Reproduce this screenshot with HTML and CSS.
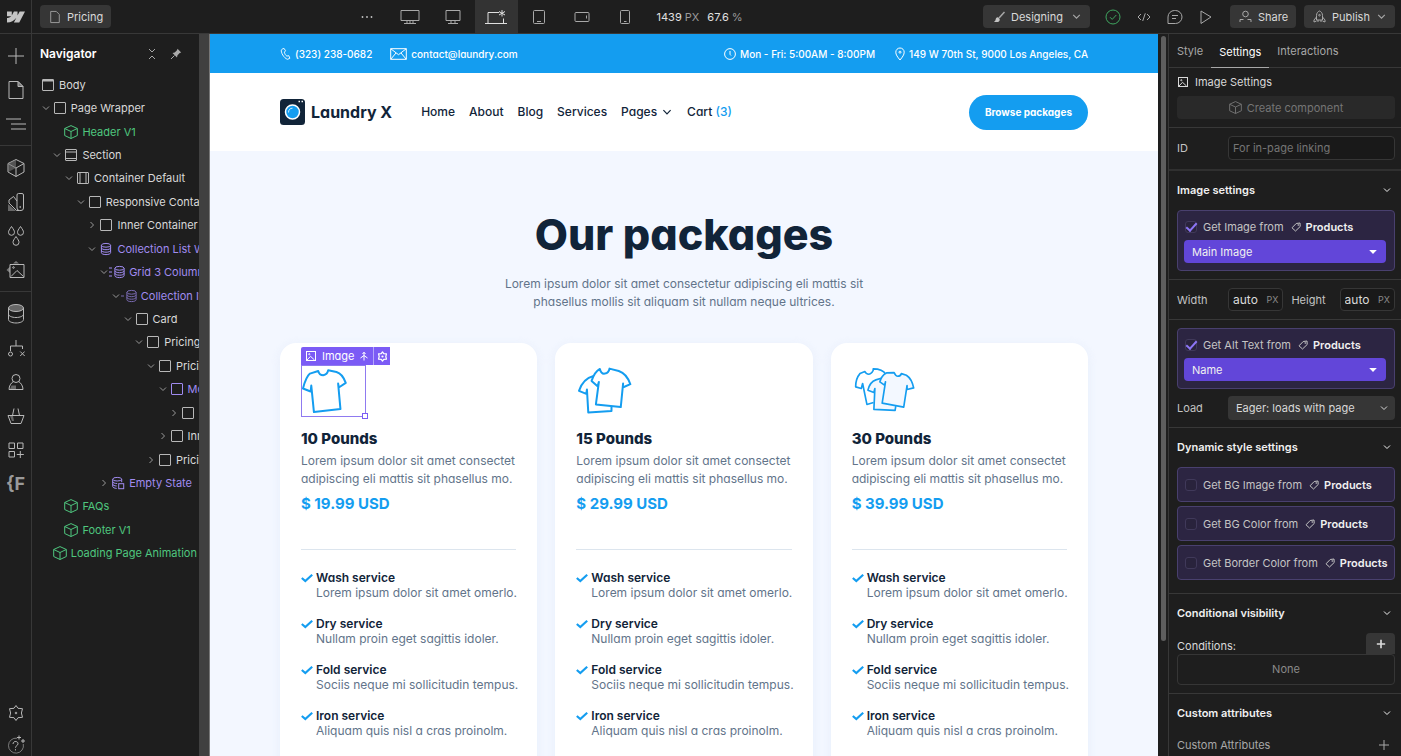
FILE: index.html
```html
<!DOCTYPE html>
<html lang="en">
<head>
<meta charset="utf-8">
<title>Pricing – Designer</title>
<link rel="stylesheet" href="styles.css">
</head>
<body>
<svg class="sprite" aria-hidden="true">
  <symbol id="i-chev" viewBox="0 0 10 10"><path d="M2 3.5 5 6.5 8 3.5"/></symbol>
  <symbol id="i-chev-r" viewBox="0 0 10 10"><path d="M3.5 2 6.5 5 3.5 8"/></symbol>
  <symbol id="i-box" viewBox="0 0 14 14"><rect x="1.5" y="1.5" width="11" height="11" rx=".5"/></symbol>
  <symbol id="i-body" viewBox="0 0 14 14"><rect x="1.5" y="1.5" width="11" height="11" rx=".5"/><path d="M1.5 2.5h11" stroke-width="2"/></symbol>
  <symbol id="i-section" viewBox="0 0 14 14"><rect x="1.5" y="1.5" width="11" height="11" rx=".5"/><path d="M1.5 4h11M1.5 10.5h11"/></symbol>
  <symbol id="i-container" viewBox="0 0 14 14"><rect x="1.5" y="1.5" width="11" height="11" rx=".5"/><path d="M4 1.5v11M10 1.5v11"/></symbol>
  <symbol id="i-cube" viewBox="1 1 14 14"><path d="M8 1.600 14.300 4.500v7L8 14.500 1.700 11.500v-7zM1.700 4.500 8 7.500l6.300-3M8 7.500v7"/></symbol>
  <symbol id="i-db" viewBox="0 0 14 14"><ellipse cx="7" cy="3.3" rx="4.6" ry="1.9"/><path d="M2.4 3.3v7.4c0 1.1 2 1.9 4.6 1.9s4.6-.8 4.6-1.9V3.3M2.4 5.8C2.4 6.9 4.4 7.700 7 7.700s4.600-.8 4.600-1.900M2.400 8.300c0 1.100 2 1.900 4.600 1.900s4.600-.8 4.600-1.900"/></symbol>
  <symbol id="i-db-list" viewBox="0 0 17 14"><path d="M0 3h3M0 7h3M0 11h3"/><ellipse cx="10.500" cy="3.300" rx="4.600" ry="1.900"/><path d="M5.900 3.300v7.400c0 1.100 2 1.900 4.600 1.900s4.600-.8 4.600-1.900V3.300M5.900 5.800c0 1.100 2 1.900 4.600 1.900s4.600-.8 4.600-1.900M5.900 8.300c0 1.100 2 1.900 4.600 1.900s4.600-.8 4.600-1.900"/></symbol>
  <symbol id="i-db-item" viewBox="0 0 17 14"><path d="M0 7h3"/><ellipse cx="10.500" cy="3.300" rx="4.600" ry="1.900"/><path d="M5.900 3.300v7.400c0 1.100 2 1.900 4.600 1.900s4.600-.8 4.600-1.900V3.300M5.900 5.800c0 1.100 2 1.900 4.600 1.900s4.600-.8 4.600-1.900M5.900 8.300c0 1.100 2 1.900 4.600 1.900s4.600-.8 4.600-1.900"/></symbol>
  <symbol id="i-db-empty" viewBox="0 0 14 14"><ellipse cx="6.200" cy="3.200" rx="4.500" ry="1.800"/><path d="M1.700 3.200v7.300c0 1 1.800 1.800 4 1.900M1.700 5.700c0 1 2 1.800 4.500 1.800M1.700 8.200c0 1 1.800 1.700 4 1.800M10.700 3.200v3"/><rect x="7.700" y="7.700" width="5" height="5"/></symbol>
  <symbol id="i-tag" viewBox="0 0 12 12"><path d="M6.200 2.500 10 2 10.200 5.500 5.500 10 2 6.800z"/><circle cx="8.200" cy="4" r=".4"/></symbol>
  <symbol id="i-image" viewBox="0 0 12 12"><rect x="1.500" y="1.500" width="9" height="9"/><path d="m2 10 3.500-3.700L9.500 10"/><circle cx="4.300" cy="4.200" r=".6"/></symbol>
  <symbol id="i-gear" viewBox="0 0 18 18"><path d="M9 1.500 11 4.300 15.500 4.700 14.400 9 15.500 13.300 11 13.700 9 16.500 7 13.700 2.500 13.300 3.600 9 2.500 4.700 7 4.300z" stroke-linejoin="round"/><circle cx="9" cy="9" r=".8"/></symbol>
  <symbol id="i-check" viewBox="0 0 12 12"><path d="M.800 6.500 4.300 9.500 11.200 3.200" stroke-width="2.200"/></symbol>
  <symbol id="i-page" viewBox="0 0 14 16"><path d="M2 1.500h6.500L12 5v9.500H2z"/></symbol>
  <symbol id="i-plus" viewBox="0 0 12 12"><path d="M6 1v10M1 6h10"/></symbol>
</svg>

<div class="app">
  <header class="topbar">
    <a class="logo" href="#" aria-label="Dashboard"><svg width="18" height="18" viewBox="0 0 24 24"><path fill="#c4c4c4" stroke="none" d="m24 4.515-7.658 14.970H9.149l3.205-6.204h-.144C9.566 16.713 5.621 18.973 0 19.485v-6.118s3.596-.213 5.710-2.435H0V4.515h6.417v5.278l.144-.001 2.622-5.277h4.854v5.244h.144l2.720-5.244H24Z"/></svg></a>
    <div class="topbar-main">
      <button class="btn"><svg width="12" height="14"><use href="#i-page"/></svg>Pricing</button>
      <div class="devices">
        <button class="device more" aria-label="More"><svg width="14" height="4" viewBox="0 0 14 4"><g fill="#c4c4c4" stroke="none"><circle cx="2.500" cy="2" r=".9"/><circle cx="7" cy="2" r=".9"/><circle cx="11.500" cy="2" r=".9"/></g></svg></button>
        <button class="device" aria-label="Large desktop"><svg width="20" height="16" viewBox="0 0 20 16"><path d="M1 1.500h18v10H1zM4 14.500h12M7 11.500v3M10 11.500v3M13 11.500v3"/></svg></button>
        <button class="device" aria-label="Desktop"><svg width="16" height="16" viewBox="0 0 16 16"><path d="M1 1.500h14v10H1zM3 14.500h10M6 11.500v3M10 11.500v3"/></svg></button>
        <button class="device active" aria-label="Base"><svg width="22" height="16" viewBox="0 0 22 16"><path d="M0 14.500h22M3 14V3.500h11M18.500 9.500V14M17 1v6.500M14 2.500l6 3.500M20 2.500 14 6" stroke="#e0e0e0"/></svg></button>
        <button class="device" aria-label="Tablet"><svg width="14" height="16" viewBox="0 0 14 16"><rect x="1.500" y="1.500" width="11" height="13" rx="1"/><path d="M5 12.500h4"/></svg></button>
        <button class="device" aria-label="Mobile landscape"><svg width="16" height="16" viewBox="0 0 16 16"><rect x="1" y="3.500" width="14" height="9" rx="1"/><path d="M12.500 6.500v3"/></svg></button>
        <button class="device" aria-label="Mobile portrait"><svg width="12" height="16" viewBox="0 0 12 16"><rect x="1.500" y="1.500" width="9" height="13" rx="1"/><path d="M5 12.500h2.500"/></svg></button>
        <p class="zoom"><span>1439 <i>PX</i></span><span>67.6 <i>%</i></span></p>
      </div>
      <div class="actions">
        <button class="btn mode"><svg width="12" height="12" viewBox="0 0 12 12"><path d="M11.500 1 6 7" stroke-width="1.500"/><path d="M5 6.300c-2 0-2.300 1.500-2.500 3L1 11h4c1.500-.5 2-2 1.600-3z" fill="#c4c4c4" stroke="none"/></svg>Designing<svg class="chev" width="11" height="11"><use href="#i-chev"/></svg></button>
        <button class="tool" aria-label="Saved"><svg width="16" height="16" viewBox="0 0 16 16" class="ok"><circle cx="8" cy="8" r="7"/><path d="m5 8.200 2.200 2.200L11.300 6"/></svg></button>
        <button class="tool" aria-label="Export code"><svg width="14" height="14" viewBox="0 0 14 14"><path d="M4 4 1 7l3 3M10 4l3 3-3 3M8.300 3.300 5.700 11"/></svg></button>
        <button class="tool" aria-label="Comments"><svg width="16" height="16" viewBox="0 0 16 16"><path d="M1 14.500V8a6.500 6.500 0 0 1 6.500-6.500h1a6.500 6.500 0 0 1 0 13zM5 6.500h6M5 9.500h4"/></svg></button>
        <button class="tool" aria-label="Preview"><svg width="14" height="16" viewBox="0 0 14 16"><path d="M2 2v12.500L12 8z"/></svg></button>
        <button class="btn share"><svg width="13" height="13" viewBox="0 0 13 13"><circle cx="6.500" cy="4" r="2.800"/><path d="M1 12V9.500h3.500M8.500 9.500H12V12"/></svg>Share</button>
        <button class="btn publish"><svg width="13" height="13" viewBox="0 0 13 13"><path d="M3.500 10V5.500C3.500 3 5 1.500 6.500 1 8 1.500 9.500 3 9.500 5.500V10zM3.500 7 1 10v2l2.500-1M9.500 7l2.500 3v2l-2.500-1M5 10v2M8 10v2"/><circle cx="6.500" cy="5.200" r=".8"/></svg>Publish<svg class="chev" width="11" height="11"><use href="#i-chev"/></svg></button>
      </div>
    </div>
  </header>

  <nav class="rail" aria-label="Tools">
    <div class="rail-group">
      <button aria-label="Add"><svg width="18" height="18" viewBox="0 0 18 18"><path d="M9 1v16M1 9h16"/></svg></button>
      <button aria-label="Pages"><svg width="18" height="20" viewBox="0 0 18 20"><path d="M2 1.500h9l5 5v12H2z"/><path d="M11 1.500v5h5z" fill="#777"/></svg></button>
      <button aria-label="Navigator"><svg width="20" height="14" viewBox="0 0 20 14"><path d="M0 2h15M5 7h15M5 12h15"/></svg></button>
    </div>
    <div class="rail-group">
      <button aria-label="Components"><svg width="18" height="20" viewBox="0 0 18 20"><path d="m9 1.500 8 4V14l-8 4.500L1 14V5.500zM1 5.500l8 4.500 8-4.500M9 10v8.500"/><path d="m9 1.500 0 8.500L1 14V5.500z" fill="#777" stroke="none" opacity=".6"/></svg></button>
      <button aria-label="Variables"><svg width="18" height="20" viewBox="0 0 18 20"><path d="M1 12v7h8z" fill="#666" stroke="none"/><path d="M10 3a1.500 1.500 0 0 1 1.500-1.500H15A1.500 1.500 0 0 1 16.500 3v13a2.500 2.500 0 0 1-2.500 2.500h-1.500A2.500 2.500 0 0 1 10 16zM10 9 6.500 4.500 2 8v3l7.500 7.500h3"/><circle cx="13.200" cy="15" r=".5"/></svg></button>
      <button aria-label="Styles"><svg width="18" height="22" viewBox="0 0 18 22"><path d="M4.500 1.500c2 3 3 4.300 3 5.800a3 3 0 0 1-6 0c0-1.500 1-2.800 3-5.800zM13.500 1.500c2 3 3 4.300 3 5.800a3 3 0 0 1-6 0c0-1.500 1-2.800 3-5.800zM9 11.500c2 3 3 4.300 3 5.800a3 3 0 0 1-6 0c0-1.500 1-2.800 3-5.800z"/></svg></button>
      <button aria-label="Assets"><svg width="20" height="20" viewBox="0 0 20 20"><path d="M7 3.500 10 1l3 2.500zM4 6.500 .5 10 4 13z" fill="#777" stroke="none"/><path d="M4 4.500h14v13H4zM5 16.500l6-6 6.500 6"/><circle cx="7.500" cy="7.500" r=".8"/></svg></button>
    </div>
    <div class="rail-group">
      <button aria-label="CMS"><svg width="18" height="22" viewBox="0 0 18 22"><ellipse cx="9" cy="5" rx="7.500" ry="3.500" fill="#666"/><path d="M1.500 5v11.500c0 2 3.300 3.500 7.500 3.500s7.500-1.500 7.500-3.500V5M1.500 11c0 2 3.300 3.500 7.500 3.500s7.500-1.500 7.500-3.500"/></svg></button>
      <button aria-label="Logic"><svg width="18" height="18" viewBox="0 0 18 18"><path d="M9 1v6M3.500 12V7h12v3M13.200 12.500l4.500 4.500M17.700 12.500 13.200 17"/><circle cx="3.500" cy="15" r="2"/></svg></button>
      <button aria-label="Users"><svg width="18" height="18" viewBox="0 0 18 18"><path d="M4.500 12.500H9V16H3z" fill="#666" stroke="none"/><circle cx="9" cy="5.500" r="4"/><path d="M6.300 8.500C4 10 2 13 2 16.500h14c0-3.500-2-6.500-4.300-8"/></svg></button>
      <button aria-label="Ecommerce"><svg width="18" height="18" viewBox="0 0 18 18"><path d="M3 9h3l1 5H5z" fill="#666" stroke="none"/><path d="M1 8.500h16L14 16.500H4zM5.500 8.500 7 1.500M12.500 8.500 11 1.500"/></svg></button>
      <button aria-label="Apps"><svg width="18" height="18" viewBox="0 0 18 18"><path d="M2 2h5.500v5.500H2zM10.500 2H16v5.500h-5.500zM2 10.500h5.500V16H2zM13.300 10v7M9.800 13.500h7"/></svg></button>
      <button class="finsweet" aria-label="Extension">{F</button>
    </div>
    <div class="rail-group rail-end">
      <button aria-label="Site settings"><svg width="18" height="18"><use href="#i-gear"/></svg></button>
      <button aria-label="Help"><svg width="20" height="20" viewBox="0 0 20 20"><path d="M11 3.200A7.500 7.500 0 1 0 17.300 9" opacity=".6"/><path d="M7 9c0-3.300 5-3.300 5-.3 0 2-2.500 1.800-2.500 4M9.500 14.200v1.200M13 .5v4M11 2.500h4M17 4v4M15 6h4"/></svg></button>
    </div>
  </nav>

  <aside class="navigator">
    <div class="nav-head">
      <h2>Navigator</h2>
      <button aria-label="Collapse all"><svg width="10" height="12" viewBox="0 0 10 12"><path d="m2 1 3 3 3-3M2 11l3-3 3 3"/></svg></button>
      <button aria-label="Pin"><svg width="12" height="12" viewBox="0 0 12 12"><path d="M1 11 4.500 7.500" /><path d="M7.500.8 11.200 4.500 9.700 5 7.500 7.300 7 9.500 2.500 5l2.200-.5L7 2.300z" fill="#aaa" stroke="none"/></svg></button>
    </div>
    <ul class="tree">
      <li style="--level:0"><svg class="tg"></svg><svg class="ic"><use href="#i-body"/></svg>Body</li>
      <li style="--level:1"><svg class="tg"><use href="#i-chev"/></svg><svg class="ic"><use href="#i-box"/></svg>Page Wrapper</li>
      <li class="green" style="--level:2"><svg class="tg"></svg><svg class="ic"><use href="#i-cube"/></svg>Header V1</li>
      <li style="--level:2"><svg class="tg"><use href="#i-chev"/></svg><svg class="ic"><use href="#i-section"/></svg>Section</li>
      <li style="--level:3"><svg class="tg"><use href="#i-chev"/></svg><svg class="ic"><use href="#i-container"/></svg>Container Default</li>
      <li style="--level:4"><svg class="tg"><use href="#i-chev"/></svg><svg class="ic"><use href="#i-box"/></svg>Responsive Container</li>
      <li style="--level:5"><svg class="tg"><use href="#i-chev-r"/></svg><svg class="ic"><use href="#i-box"/></svg>Inner Container</li>
      <li class="purple" style="--level:5"><svg class="tg"><use href="#i-chev"/></svg><svg class="ic"><use href="#i-db"/></svg>Collection List Wrapper</li>
      <li class="purple" style="--level:6"><svg class="tg"><use href="#i-chev"/></svg><svg class="ic wide"><use href="#i-db-list"/></svg>Grid 3 Columns</li>
      <li class="purple" style="--level:7"><svg class="tg"><use href="#i-chev"/></svg><svg class="ic wide dim"><use href="#i-db-item"/></svg>Collection Item</li>
      <li style="--level:8"><svg class="tg"><use href="#i-chev"/></svg><svg class="ic"><use href="#i-box"/></svg>Card</li>
      <li style="--level:9"><svg class="tg"><use href="#i-chev"/></svg><svg class="ic"><use href="#i-box"/></svg>Pricing</li>
      <li style="--level:10"><svg class="tg"><use href="#i-chev"/></svg><svg class="ic"><use href="#i-box"/></svg>Pricing</li>
      <li class="purple" style="--level:11"><svg class="tg"><use href="#i-chev"/></svg><svg class="ic"><use href="#i-box"/></svg>Mo</li>
      <li style="--level:12"><svg class="tg"><use href="#i-chev-r"/></svg><svg class="ic"><use href="#i-box"/></svg></li>
      <li style="--level:11"><svg class="tg"><use href="#i-chev-r"/></svg><svg class="ic"><use href="#i-box"/></svg>Inner</li>
      <li style="--level:10"><svg class="tg"><use href="#i-chev-r"/></svg><svg class="ic"><use href="#i-box"/></svg>Pricing</li>
      <li class="purple" style="--level:6"><svg class="tg"><use href="#i-chev-r"/></svg><svg class="ic"><use href="#i-db-empty"/></svg>Empty State</li>
      <li class="green" style="--level:2"><svg class="tg"></svg><svg class="ic"><use href="#i-cube"/></svg>FAQs</li>
      <li class="green" style="--level:2"><svg class="tg"></svg><svg class="ic"><use href="#i-cube"/></svg>Footer V1</li>
      <li class="green" style="--level:1"><svg class="tg"></svg><svg class="ic"><use href="#i-cube"/></svg>Loading Page Animation</li>
    </ul>
  </aside>

  <div class="gutter"></div>

  <main class="site">
    <div class="infobar">
      <a href="#"><svg width="11" height="14" viewBox="0 0 12 14"><path d="M3.200 1.200 1.500 2.500C.7 5 4 11.500 8.300 12.800l2.500-1.200L9.500 8.800 7.500 9.300C6 8.500 5 6.500 4.800 5L6 3.500 4.500 1z"/></svg>(323) 238-0682</a>
      <a href="#" class="mail"><svg width="17" height="12" viewBox="0 0 17 12"><path d="M.7.700h15.600v10.600H.7zM.7.700l7.800 6 7.800-6M.7 11.300 6 5M16.300 11.300 11 5"/></svg>contact@laundry.com</a>
      <span class="push"><svg width="12" height="12" viewBox="0 0 12 12"><circle cx="6" cy="6" r="5.400"/><path d="M6 3v3.300l1 1.200"/></svg>Mon - Fri: 5:00AM - 8:00PM</span>
      <span class="place"><svg width="10" height="14" viewBox="0 0 10 14"><path d="M5 13C2.500 10 .8 7.700.8 5.200a4.200 4.200 0 0 1 8.400 0C9.200 7.700 7.500 10 5 13z"/><circle cx="5" cy="5.200" r="1"/></svg>149 W 70th St, 9000 Los Angeles, CA</span>
    </div>
    <div class="sitenav">
      <a class="brand" href="#"><svg width="25" height="26" viewBox="0 0 25 26"><rect width="25" height="26" rx="3.500" fill="#112439" stroke="none"/><circle cx="12.500" cy="13" r="7" fill="#149df0" stroke="#fff" stroke-width="1.500"/><path d="M8.500 13.500c0-2.800 1.700-4.300 4-4.300" stroke="#fff" stroke-width=".8"/><path d="M18.500 2.500h1.500M21.500 2.500h1.500" stroke="#fff" stroke-width="1.500"/></svg>Laundry X</a>
      <a href="#">Home</a><a href="#">About</a><a href="#">Blog</a><a href="#">Services</a>
      <a class="pages" href="#">Pages<svg width="12" height="12"><use href="#i-chev"/></svg></a>
      <a class="cart" href="#">Cart <b>(3)</b></a>
      <a class="cta" href="#">Browse packages</a>
    </div>
    <section class="packages">
      <h1>Our packages</h1>
      <p class="lead">Lorem ipsum dolor sit amet consectetur adipiscing eli mattis sit phasellus mollis sit aliquam sit nullam neque ultrices.</p>
      <div class="cards">
        <article class="card">
          <div class="shirt selected">
            <svg width="64" height="52" viewBox="93 105 193 155"><path d="M145 122Q148 135 160 135 172 133 175 120L200 125Q218 130 228 158L207 172 205 160 212 237 132 246 124 166 122 184 99 175Q108 140 120 130z"/></svg>
            <div class="select-tag"><span><svg width="12" height="12"><use href="#i-image"/></svg>Image<svg width="10" height="10" viewBox="0 0 10 10"><path d="M5 9.500v-8M3.500 3 5 1.200 6.500 3M1.500 7 5 4.500 8.500 7"/></svg></span><button aria-label="Element settings"><svg width="11" height="11"><use href="#i-gear"/></svg></button></div>
            <i class="handle"></i>
          </div>
          <h3>10 Pounds</h3>
          <p class="desc">Lorem ipsum dolor sit amet consectet adipiscing eli mattis sit phasellus mo.</p>
          <p class="price">$ 19.99 USD</p>
          <ul class="features">
            <li><svg><use href="#i-check"/></svg><div><strong>Wash service</strong><p>Lorem ipsum dolor sit amet omerlo.</p></div></li>
            <li><svg><use href="#i-check"/></svg><div><strong>Dry service</strong><p>Nullam proin eget sagittis idoler.</p></div></li>
            <li><svg><use href="#i-check"/></svg><div><strong>Fold service</strong><p>Sociis neque mi sollicitudin tempus.</p></div></li>
            <li><svg><use href="#i-check"/></svg><div><strong>Iron service</strong><p>Aliquam quis nisl a cras proinolm.</p></div></li>
          </ul>
        </article>
        <article class="card">
          <div class="shirt">
            <svg width="64" height="52" viewBox="919 105 193 155"><path d="M972 137Q940 145 928 182L950 191 952 178 956 247 1026 243V229"/><path d="M991 116Q995 132 1006 130 1018 128 1020 115L1048 122Q1072 130 1083 162L1060 172 1061 160 1054 231 979 223 988 155 984 168 966 152Q975 125 991 116z"/></svg>
          </div>
          <h3>15 Pounds</h3>
          <p class="desc">Lorem ipsum dolor sit amet consectet adipiscing eli mattis sit phasellus mo.</p>
          <p class="price">$ 29.99 USD</p>
          <ul class="features">
            <li><svg><use href="#i-check"/></svg><div><strong>Wash service</strong><p>Lorem ipsum dolor sit amet omerlo.</p></div></li>
            <li><svg><use href="#i-check"/></svg><div><strong>Dry service</strong><p>Nullam proin eget sagittis idoler.</p></div></li>
            <li><svg><use href="#i-check"/></svg><div><strong>Fold service</strong><p>Sociis neque mi sollicitudin tempus.</p></div></li>
            <li><svg><use href="#i-check"/></svg><div><strong>Iron service</strong><p>Aliquam quis nisl a cras proinolm.</p></div></li>
          </ul>
        </article>
        <article class="card">
          <div class="shirt trio">
            <svg width="64" height="52" viewBox="576 105 193 155"><path d="M678 132Q668 116 640 116L640 120Q635 132 625 132 618 130 615 124L600 130Q587 145 587 170L604 175 608 160 621 223 641 217"/><path fill="#f3f8ff" d="M664 144 648 149Q630 155 624 180L642 187 645 175 642 238 706 241 708 228"/><path fill="#f3f8ff" d="M680 128 703 127Q708 138 714 138 722 138 725 130L740 135Q756 145 762 173L742 178 742 166 732 231 667 219 677 155 674 165 660 155Q665 135 680 128z"/></svg>
          </div>
          <h3>30 Pounds</h3>
          <p class="desc">Lorem ipsum dolor sit amet consectet adipiscing eli mattis sit phasellus mo.</p>
          <p class="price">$ 39.99 USD</p>
          <ul class="features">
            <li><svg><use href="#i-check"/></svg><div><strong>Wash service</strong><p>Lorem ipsum dolor sit amet omerlo.</p></div></li>
            <li><svg><use href="#i-check"/></svg><div><strong>Dry service</strong><p>Nullam proin eget sagittis idoler.</p></div></li>
            <li><svg><use href="#i-check"/></svg><div><strong>Fold service</strong><p>Sociis neque mi sollicitudin tempus.</p></div></li>
            <li><svg><use href="#i-check"/></svg><div><strong>Iron service</strong><p>Aliquam quis nisl a cras proinolm.</p></div></li>
          </ul>
        </article>
      </div>
    </section>
  </main>

  <div class="scrollbar"><i></i></div>

  <aside class="panel">
    <div class="tabs" role="tablist">
      <button role="tab">Style</button><button role="tab" class="on" aria-selected="true">Settings</button><button role="tab">Interactions</button>
    </div>
    <div class="block summary">
      <h2><svg width="12" height="12"><use href="#i-image"/></svg>Image Settings</h2>
      <button class="create" disabled><svg width="13" height="13"><use href="#i-cube"/></svg>Create component</button>
    </div>
    <div class="block id-row">
      <label for="el-id">ID</label><input id="el-id" type="text" placeholder="For in-page linking">
    </div>
    <div class="block">
      <h3>Image settings<svg width="10" height="10"><use href="#i-chev"/></svg></h3>
      <div class="bind">
        <label><input type="checkbox" checked>Get Image from<svg><use href="#i-tag"/></svg><b>Products</b></label>
        <div class="pick"><select aria-label="Image field"><option>Main Image</option></select><svg width="10" height="10" viewBox="0 0 10 10"><path d="M1.200 3h7.600L5 7z"/></svg></div>
      </div>
    </div>
    <div class="block size">
      <label for="w">Width</label><span class="num"><input id="w" type="text" value="auto"><i>PX</i></span>
      <label for="h">Height</label><span class="num"><input id="h" type="text" value="auto"><i>PX</i></span>
    </div>
    <div class="block alt">
      <div class="bind">
        <label><input type="checkbox" checked>Get Alt Text from<svg><use href="#i-tag"/></svg><b>Products</b></label>
        <div class="pick"><select aria-label="Alt text field"><option>Name</option></select><svg width="10" height="10" viewBox="0 0 10 10"><path d="M1.200 3h7.600L5 7z"/></svg></div>
      </div>
      <div class="load"><label for="load">Load</label><div class="pick plain"><select id="load"><option>Eager: loads with page</option></select><svg width="10" height="10"><use href="#i-chev"/></svg></div></div>
    </div>
    <div class="block dynamic">
      <h3>Dynamic style settings<svg width="10" height="10"><use href="#i-chev"/></svg></h3>
      <div class="bind"><label><input type="checkbox">Get BG Image from<svg><use href="#i-tag"/></svg><b>Products</b></label></div>
      <div class="bind"><label><input type="checkbox">Get BG Color from<svg><use href="#i-tag"/></svg><b>Products</b></label></div>
      <div class="bind"><label><input type="checkbox">Get Border Color from<svg><use href="#i-tag"/></svg><b>Products</b></label></div>
    </div>
    <div class="block">
      <h3>Conditional visibility<svg width="10" height="10"><use href="#i-chev"/></svg></h3>
      <div class="cond"><span>Conditions:</span><button aria-label="Add condition"><svg width="10" height="10"><use href="#i-plus"/></svg></button></div>
      <p class="none">None</p>
    </div>
    <div class="block">
      <h3>Custom attributes<svg width="10" height="10"><use href="#i-chev"/></svg></h3>
      <div class="attrs"><span>Custom Attributes</span><button aria-label="Add attribute"><svg width="12" height="12"><use href="#i-plus"/></svg></button></div>
    </div>
  </aside>
</div>
</body>
</html>
```
FILE: styles.css
```css
* { box-sizing: border-box; margin: 0; padding: 0; }
html, body { height: 100%; overflow: hidden; }
body { font-family: Inter, "Liberation Sans", sans-serif; font-size: 11px; line-height: 16px; color: #d9d9d9; background: #1e1e1e; }
button, input, select { font: inherit; color: inherit; background: none; border: 0; outline: 0; }
a { color: inherit; text-decoration: none; }
ul { list-style: none; }
i { font-style: normal; }
svg { fill: none; stroke: currentColor; stroke-width: 1; flex: none; }
.sprite { position: absolute; width: 0; height: 0; }

.app {
  display: grid; height: 100vh; overflow: hidden;
  grid-template: 34px minmax(0, 1fr) / 32px 167px 11px minmax(0, 1fr) 11px 232px;
}

/* top bar */
.topbar { grid-column: 1 / -1; display: flex; border-bottom: 1px solid #383838; }
.logo { width: 32px; display: grid; place-items: center; border-right: 1px solid #383838; }
.topbar-main { flex: 1; display: flex; align-items: center; justify-content: space-between; padding: 0 6px 0 8px; }
.btn { display: flex; align-items: center; gap: 6px; height: 23px; padding: 0 8px 0 9px; border-radius: 4px; background: #363636; color: #d9d9d9; }
.btn svg, .tool svg, .device svg { color: #a8a8a8; }
.devices { display: flex; align-items: center; height: 33px; }
.device { width: 43px; height: 33px; display: grid; place-items: center; }
.device.active { background: #333; }
.zoom { display: flex; gap: 8px; padding: 0 6px 0 10px; color: #e0e0e0; }
.zoom i { color: #9a9a9a; }
.actions { display: flex; align-items: center; }
.tool { width: 31px; height: 30px; display: grid; place-items: center; }
.mode { width: 107px; margin-right: 8px; padding-left: 10px; }
.mode .chev, .publish .chev { margin-left: auto; }
.share { width: 66px; margin: 0 8px; }
.publish { width: 91px; }
.tool .ok { color: #3fa660; }

/* tool rail */
.rail { display: flex; flex-direction: column; border-right: 1px solid #383838; min-height: 0; }
.rail-group { display: flex; flex-direction: column; padding: 5px 0 4px; border-bottom: 1px solid #383838; }
.rail-group button { height: 34px; display: grid; place-items: center; color: #b8b8b8; }
.rail-group:nth-child(3) { border: 0; }
.rail-group .finsweet { font-size: 18px; font-weight: 700; color: #9a9a9a; }
.rail-end { margin-top: auto; padding: 0; border: 0; gap: 10px; }
.rail-group.rail-end button { height: 22px; }

/* navigator */
.navigator { overflow: hidden; }
.nav-head { display: flex; align-items: center; gap: 12px; height: 39px; padding: 0 17px 0 8px; }
.nav-head h2 { flex: 1; font-size: 12px; font-weight: 600; color: #fff; }
.nav-head button { width: 12px; display: grid; place-items: center; color: #a8a8a8; }
.tree { display: grid; grid-auto-rows: 1fr; height: 492px; }
.tree li { display: flex; align-items: center; padding-left: calc(var(--level) * 7%); white-space: nowrap; color: #d9d9d9; }
.tg { width: 10px; height: 10px; margin: 0 2px 0 -3px; color: #999; }
.ic { width: 14px; height: 14px; margin-right: 4px; color: #b8b8b8; overflow: visible; }
.tree .wide { width: 17px; margin: 0 3px 0 -2px; }
.tree .green, .green .ic { color: #4fc77f; }
.tree .purple, .purple .ic { color: #a08bf0; }
.tree .dim { opacity: .7; }
.gutter { background: #404040; border-right: 1px solid #777; }

/* previewed site */
.site { background: #f3f7ff; color: #112439; overflow: hidden; font-feature-settings: "cv11"; }
.infobar { display: flex; align-items: center; height: 39px; padding: 0 70px; background: #149df0; color: #fff; font-size: 10px; font-weight: 500; }
.infobar > * { display: flex; align-items: center; gap: 4px; }
.infobar .mail { margin-left: 18px; }
.infobar .push { margin-left: auto; }
.infobar .place { margin-left: 20px; }
.sitenav { display: flex; align-items: center; gap: 14px; height: 78px; padding: 0 70px; background: #fff; font-size: 12px; font-weight: 500; color: #112439; }
.brand { display: flex; align-items: center; gap: 6px; margin-right: 15px; font-size: 16px; font-weight: 700; }
.pages { display: flex; align-items: center; gap: 4px; }
.cart b { color: #149df0; font-weight: 500; }
.cta { margin-left: auto; height: 35px; padding: 0 16px; border-radius: 18px; background: #149df0; color: #fff; font-size: 10px; font-weight: 700; line-height: 35px; }
.packages { padding: 55px 70px 0; }
h1 { text-align: center; font-size: 43px; line-height: 56px; font-weight: 800; }
.lead { max-width: 370px; margin: 13px auto 0; text-align: center; font-size: 12px; line-height: 18px; color: #62748a; }
.cards { display: grid; grid-template-columns: repeat(3, minmax(0, 1fr)); gap: 18px; margin-top: 32px; }
.card { padding: 22px 21px 70px; border-radius: 16px; background: #fff; box-shadow: 0 2px 10px #dfe8f699; }
.shirt { position: relative; width: 65px; height: 52px; color: #149df0; }
.shirt > svg { display: block; stroke-width: 6; stroke-linejoin: round; }
.trio > svg { stroke-width: 5; }
.selected { outline: 1px solid #8f7af0; outline-offset: -1px; }
.select-tag { position: absolute; bottom: 100%; left: 0; display: flex; height: 18px; background: #7b5bf5; color: #fff; border-radius: 2px 0 0; }
.select-tag span { display: flex; align-items: center; gap: 5px; padding: 0 4px; }
.select-tag button { display: grid; place-items: center; width: 17px; border-left: 1px solid #b5a5fa; }
.select-tag button svg { stroke-width: 2; }
.handle { position: absolute; right: -2px; bottom: -2px; width: 6px; height: 6px; background: #fff; border: 1px solid #7b5bf5; }
.card h3 { margin-top: 12px; font-size: 15px; line-height: 20px; font-weight: 800; }
.desc { margin-top: 3px; font-size: 12px; line-height: 18px; color: #62748a; }
.price { margin: 4px 0 33px; font-size: 15px; line-height: 24px; font-weight: 700; color: #149df0; }
.features { display: grid; gap: 16px; padding-top: 20px; border-top: 1px solid #dce5ee; }
.features li { display: flex; gap: 3px; line-height: 15px; font-size: 12px; }
.features svg { width: 12px; height: 15px; color: #149df0; }
.features strong { display: block; font-weight: 600; }
.features p { color: #62748a; white-space: nowrap; }

.scrollbar { padding: 2px 2px 0 3px; border-right: 1px solid #383838; }
.scrollbar i { display: block; height: 84%; border-radius: 3px; background: #5e5e5e; }

/* settings panel */
.panel { overflow: hidden; display: flex; flex-direction: column; }
.tabs { display: flex; height: 34px; border-bottom: 1px solid #383838; flex: none; }
.tabs button { padding: 2px 8px 0; color: #a8a8a8; border-bottom: 1px solid transparent; }
.tabs .on { color: #fff; border-color: #a8a8a8; margin-bottom: -1px; }
.block { flex: none; padding: 8px 6px 8px 8px; border-bottom: 1px solid #383838; }
.summary { padding-top: 6px; }
.summary h2 { display: flex; align-items: center; gap: 6px; font-size: 11px; font-weight: 400; }
.create { display: flex; align-items: center; justify-content: center; gap: 5px; width: 100%; height: 23px; margin-top: 6px; border-radius: 4px; background: #292929; color: #757575; }
.id-row { display: grid; grid-template-columns: 51px 1fr; align-items: center; padding-bottom: 9px; border-bottom: 2px solid #303030; }
.id-row input, .num { height: 24px; border: 1px solid #363636; border-radius: 4px; background: #191919; padding: 0 4px; min-width: 0; }
.id-row input::placeholder { color: #757575; }
.panel label { color: #c4c4c4; }
.block h3 { display: flex; align-items: center; justify-content: space-between; height: 22px; margin-bottom: 9px; padding-right: 3px; font-size: 11px; font-weight: 600; color: #f0f0f0; }
.bind { padding: 8px 8px 7px 6px; border: 1px solid #49406e; border-radius: 4px; background: #2c2542; }
.bind label { display: flex; align-items: center; padding-left: 1px; white-space: nowrap; }
.bind label svg { width: 12px; height: 12px; margin: 0 4px 0 6px; }
.bind label b { font-weight: 600; color: #f0f0f0; }
.bind input { appearance: none; width: 12px; height: 12px; margin-right: 6px; border: 1px solid #40395a; border-radius: 3px; background: #29233c; display: grid; place-items: center; }
.bind input:checked::before { content: ""; width: 9px; height: 4px; margin-bottom: 3px; border: solid #8c75f5; border-width: 0 0 2px 2px; rotate: -48deg; }
.pick { display: grid; align-items: center; }
.pick > * { grid-area: 1 / 1; }
.pick > svg { justify-self: end; margin-right: 8px; pointer-events: none; }
.pick select { appearance: none; width: 100%; height: 23px; padding: 0 8px; border-radius: 4px; background: #6246d9; color: #f0f0f0; }
.bind .pick { margin-top: 5px; }
.bind .pick svg { fill: #fff; stroke: none; }
.plain select { background: #363636; color: #d9d9d9; height: 24px; }
.plain > svg { margin-right: 6px; }
.size { display: grid; grid-template-columns: 51px 1fr auto 1fr; align-items: center; }
.size label:nth-of-type(2) { padding: 0 14px 0 8px; }
.num { display: flex; align-items: center; height: 23px; font-size: 12px; }
.num input { width: 28px; flex: 1; min-width: 0; }
.num i { font-size: 9px; color: #8a8a8a; }
.load { display: grid; grid-template-columns: 51px 1fr; align-items: center; margin-top: 7px; }
.alt { padding-bottom: 7px; }
.dynamic { padding-bottom: 13px; }
.dynamic .bind { padding: 9px 6px 8px; }
.dynamic .bind + .bind { margin-top: 4px; }
.cond { display: flex; align-items: end; justify-content: space-between; }
.cond button { width: 29px; height: 21px; display: grid; place-items: center; background: #363636; border-radius: 4px 4px 0 0; }
.cond button svg { stroke-width: 2; }
.none { height: 31px; border: 1px solid #363636; border-radius: 4px; text-align: center; line-height: 29px; color: #8a8a8a; }
.attrs { display: flex; align-items: center; justify-content: space-between; height: 24px; padding-right: 5px; color: #a8a8a8; }
.attrs button { display: grid; }
```
